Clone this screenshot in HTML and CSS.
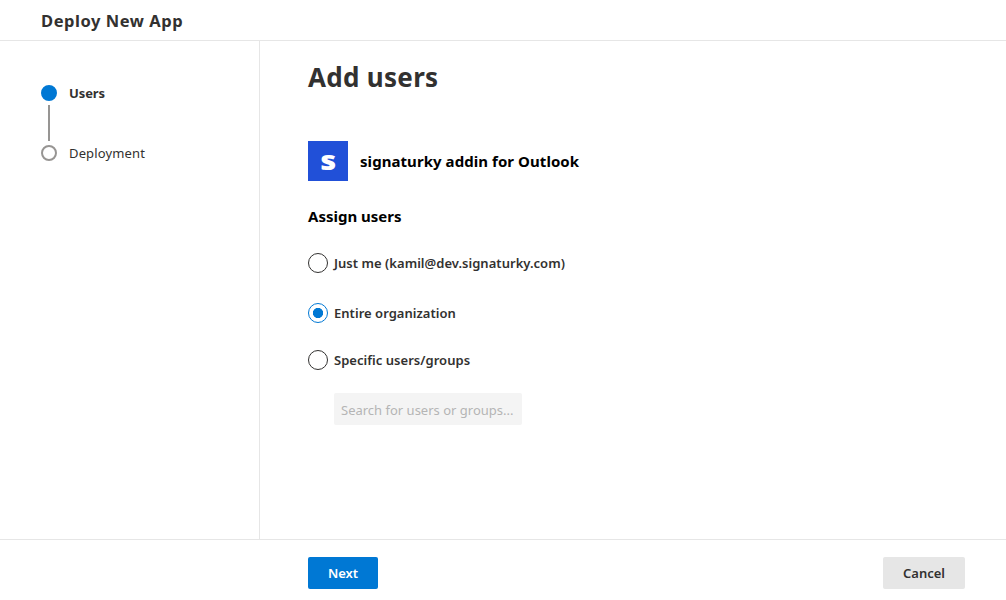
FILE: index.html
```html
<!DOCTYPE html>
<html lang="en">
<head>
<meta charset="utf-8">
<title>Deploy New App</title>
<link rel="stylesheet" href="styles.css">
</head>
<body>
<header class="header">Deploy New App</header>
<div class="body">
  <nav class="steps">
    <div class="step current"><span class="dot"></span>Users</div>
    <div class="line"></div>
    <div class="step"><span class="dot"></span>Deployment</div>
  </nav>
  <main class="main">
    <h1 class="title">Add users</h1>
    <div class="app">
      <svg class="logo" viewBox="0 0 40 40"><rect width="40" height="40" fill="#2150d8"/><text class="logo-letter" transform="translate(20.300 29) scale(1.150 1)" text-anchor="middle">s</text></svg>
      <span class="app-name">signaturky addin for Outlook</span>
    </div>
    <h2 class="subtitle">Assign users</h2>
    <div class="option"><span class="radio"></span>Just me (kamil@dev.signaturky.com)</div>
    <div class="option second"><span class="radio checked"></span>Entire organization</div>
    <div class="option third"><span class="radio"></span>Specific users/groups</div>
    <div class="search">Search for users or groups...</div>
  </main>
</div>
<footer class="footer">
  <button class="btn primary">Next</button>
  <button class="btn">Cancel</button>
</footer>
</body>
</html>
```

FILE: styles.css
```css
* { box-sizing: border-box; }
body {
  margin: 0;
  height: 600px;
  display: flex;
  flex-direction: column;
  overflow: hidden;
  background: #fff;
  color: #323130;
  font: 13px/20px "Noto Sans", sans-serif;
}
.header {
  height: 41px;
  padding-left: 41px;
  border-bottom: 1px solid #e6e6e6;
  font-size: 16.500px;
  font-weight: 700;
  line-height: 42px;
  letter-spacing: .55px;
}
.body { height: 498px; display: flex; }
.steps {
  width: 260px;
  padding: 42px 0 0 41px;
  border-right: 1px solid #e6e6e6;
  letter-spacing: .15px;
}
.step { display: flex; align-items: center; gap: 12px; height: 20px; }
.current { font-weight: 700; letter-spacing: -.1px; }
.dot { width: 16px; height: 16px; border: 2px solid #979593; border-radius: 50%; }
.current .dot { background: #0078d4; border-color: #0078d4; }
.line { width: 2px; height: 36px; margin: 2px 0 2px 7px; background: #979593; }
.main { flex: 1; padding: 18px 0 0 48px; }
.title { margin: 0; font-size: 26px; line-height: 37px; font-weight: 700; letter-spacing: .3px; }
.app { display: flex; align-items: center; gap: 12px; margin-top: 45px; height: 40px; color: #000; }
.logo { width: 40px; height: 40px; }
.logo-letter { font: 900 27px "Noto Sans", sans-serif; fill: #fff; }
.app-name, .subtitle { font-size: 15px; font-weight: 700; color: #000; }
.app-name { letter-spacing: .06px; }
.subtitle { margin: 25px 0 0; line-height: 20px; }
.option { display: flex; align-items: center; gap: 6px; height: 20px; margin-top: 27px; font-weight: 600; letter-spacing: .03px; }
.second { margin-top: 30px; }
.third { margin-top: 27px; }
.radio { width: 20px; height: 20px; border: 1px solid #323130; border-radius: 50%; }
.checked { border-color: #0078d4; background: radial-gradient(circle, #0078d4 4.800px, #fff 5.400px); }
.search {
  width: 188px;
  height: 32px;
  margin: 23px 0 0 26px;
  padding-left: 7px;
  border-radius: 2px;
  background: #f4f4f4;
  color: #b5b5b5;
  line-height: 34px;
  white-space: nowrap;
}
.footer {
  height: 61px;
  display: flex;
  justify-content: space-between;
  padding: 17px 41px 0 308px;
  border-top: 1px solid #e6e6e6;
}
.btn {
  width: 82px;
  height: 32px;
  padding: 0;
  border: 0;
  border-radius: 2px;
  background: #e6e6e6;
  color: #323130;
  font: 600 13px/32px "Noto Sans", sans-serif;
}
.primary { width: 70px; background: #0078d4; color: #fff; }
```
